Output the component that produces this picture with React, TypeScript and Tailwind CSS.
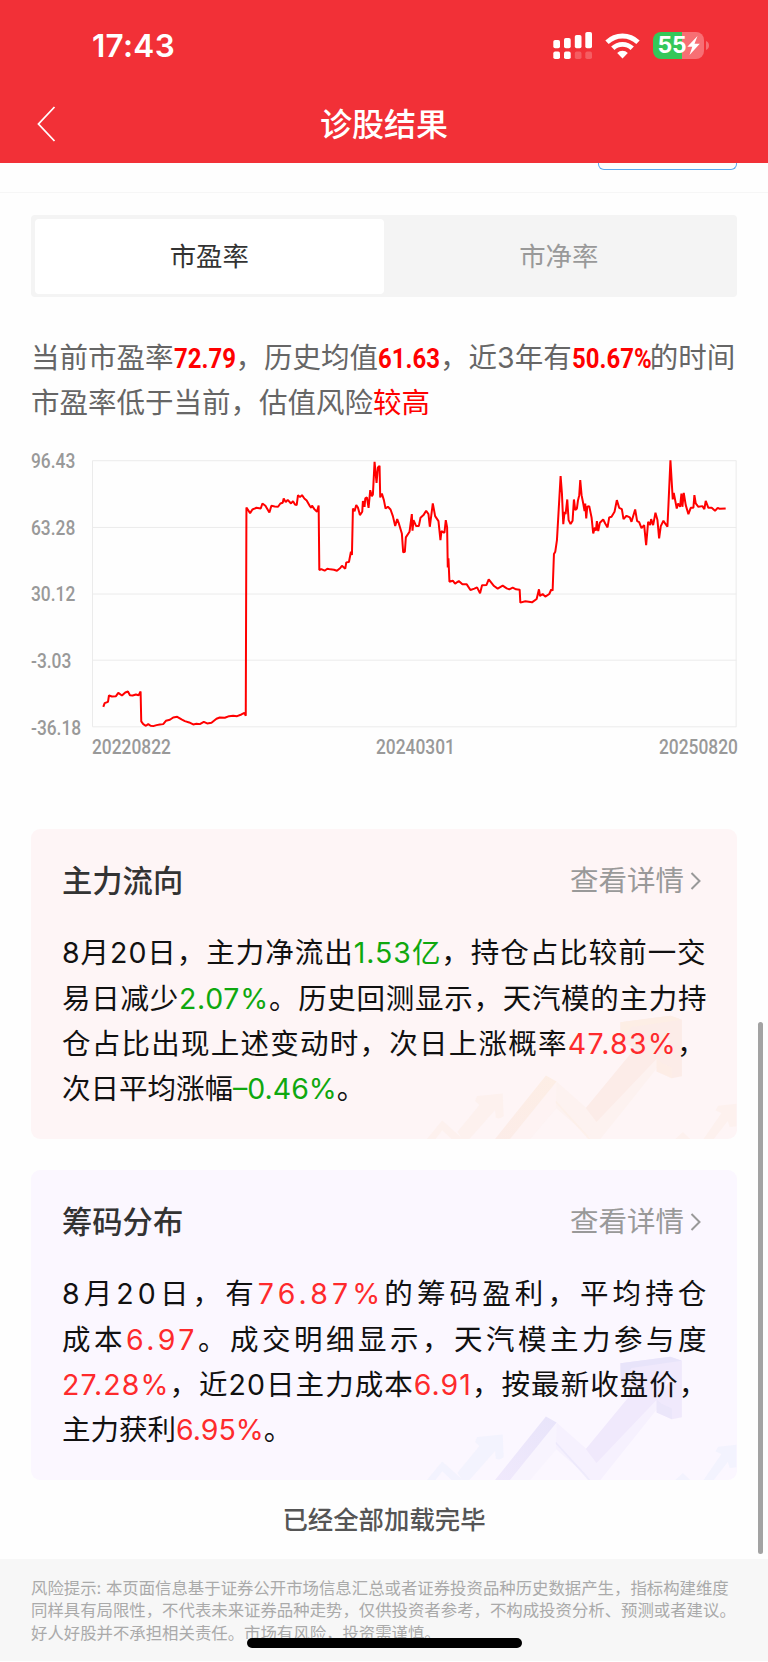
import type { ReactNode } from "react";
import clsx from "clsx";

const PE_SERIES =
  "310,801 314,790 324,786 327,767 336,770 348,769 355,759 366,767 376,758 384,755 390,766 398,767 408,764 416,766 422,755 424,845 430,853 438,858 445,853 452,858 460,859 470,856 480,854 490,853 498,843 510,840 520,833 532,831 545,839 555,844 568,848 580,854 590,852 600,853 612,846 622,851 635,849 650,837 660,833 675,834 688,829 700,828 712,829 725,824 734,819 738,828 740,202 751,219 758,208 770,203 783,205 788,190 797,197 809,217 815,197 825,199 835,200 842,190 849,188 852,175 858,186 864,179 874,190 880,183 886,193 891,195 895,165 901,171 907,165 914,175 921,181 930,197 935,203 937,196 944,207 952,215 957,196 959,390 965,387 975,392 983,386 992,388 1003,389 1012,392 1022,384 1027,377 1037,386 1040,367 1048,366 1054,335 1057,345 1060,205 1065,213 1070,195 1075,202 1081,225 1088,215 1090,183 1095,200 1097,175 1102,172 1107,203 1112,150 1117,168 1120,163 1125,65 1131,128 1135,82 1140,77 1142,172 1147,160 1153,180 1158,205 1165,200 1173,208 1180,228 1187,258 1193,237 1198,250 " +
  "1207,280 1211,337 1216,335 1219,292 1230,275 1237,222 1239,272 1242,240 1250,258 1258,258 1263,233 1272,225 1280,212 1287,222 1291,260 1300,190 1307,228 1317,243 1323,300 1326,273 1335,278 1339,240 1343,262 1345,382 1347,355 1350,425 1360,422 1367,431 1378,423 1389,433 1402,433 1413,450 1425,446 1433,442 1442,460 1448,436 1461,435 1468,418 1484,438 1495,446 1510,437 1522,445 1530,448 1540,443 1550,448 1561,449 1563,488 1578,484 1598,487 1612,477 1619,448 1622,468 1630,462 1638,470 1650,462 1656,448 1660,452 1664,342 1668,335 1673,300 1684,108 1688,160 1692,252 1696,215 1699,222 1704,178 1708,240 1714,252 1720,242 1724,178 1728,210 1733,205 1736,182 1740,165 1743,120 1747,165 1752,190 1756,213 1758,190 1761,235 1764,200 1770,198 1777,232 1782,280 1787,262 1790,272 1793,243 1797,273 1802,248 1812,238 1818,250 1825,262 1830,232 1837,230 1846,215 1853,180 1860,203 1868,207 1873,237 1882,227 1892,232 1897,245 1908,208 1914,243 1920,246 1927,264 1935,255 1941,315 1947,245 1953,255 1956,237 1962,255 1969,218 1975,240 1980,295 1985,258 1993,242 1998,250 2005,260 2008,195 2014,60 2021,178 2024,158 2033,205 2037,190 2043,200 2047,160 2050,200 2054,158 2060,195 2068,222 2075,203 2083,203 2086,165 2090,190 2098,200 2110,198 2116,207 2120,182 2128,203 2138,203 2148,212 2156,203 2162,206 2180,205";

const Y_TICKS = ["96.43", "63.28", "30.12", "-3.03", "-36.18"];
const GRID_Y = [61.5, 262, 462, 661, 861];

function SignalIcon() {
  return (
    <svg width="40" height="28" viewBox="0 0 40 28" fill="#fff">
      <rect x="0.3" y="8" width="6.7" height="8.3" rx="1.8" />
      <rect x="11" y="6" width="6.7" height="10.3" rx="1.8" />
      <rect x="21.8" y="3" width="6.7" height="13.3" rx="1.8" />
      <rect x="32.3" y="0" width="6.7" height="16.3" rx="1.8" />
      <rect x="0.3" y="19.6" width="6.7" height="7.4" rx="1.8" />
      <rect x="11" y="19.6" width="6.7" height="7.4" rx="1.8" />
      <rect x="21.8" y="19.6" width="6.7" height="7.4" rx="1.8" opacity="0.22" />
      <rect x="32.3" y="19.6" width="6.7" height="7.4" rx="1.8" opacity="0.22" />
    </svg>
  );
}

function WifiIcon() {
  return (
    <svg width="35" height="26" viewBox="0 0 35 26" fill="none">
      <g stroke="#fff" strokeWidth="4.8">
        <path d="M2 9.3a22.2 22.2 0 0 1 31 0" />
        <path d="M7.8 15.3a13.8 13.8 0 0 1 19.4 0" />
      </g>
      <path d="M17.5 25.4l5.3-5.3a7.4 7.4 0 0 0-10.6 0z" fill="#fff" />
    </svg>
  );
}

function Battery() {
  return (
    <div className="flex items-center gap-[2px]">
      <div className="flex h-[27px] w-[51px] items-center justify-center rounded-[8px] bg-[linear-gradient(to_right,#34c759_56%,#f76f74_56%)]">
        <span className="text-[23px] font-bold leading-none tracking-[-0.2px]">55</span>
        <svg width="13" height="19" viewBox="0 0 13 19" fill="#fff">
          <path d="M10.500 0L0.300 10.800h5L2.500 19 12.800 7.800H7.500z" />
        </svg>
      </div>
      <svg width="4" height="9" viewBox="0 0 4 9">
        <path d="M0 0c4 1.2 4 7.8 0 9z" fill="#f76f74" />
      </svg>
    </div>
  );
}

function Header() {
  return (
    <header className="h-[163.4px] shrink-0 bg-[#f23037] text-white">
      <div className="flex h-[91px] items-center pl-[92px] pr-[58px]">
        <span className="mr-auto pt-px text-[31.5px] font-semibold leading-none tracking-[0.3px]">
          17:43
        </span>
        <SignalIcon />
        <div className="ml-[12px] mr-[13px]">
          <WifiIcon />
        </div>
        <Battery />
      </div>
      <div className="grid h-[66px] grid-cols-[1fr_auto_1fr] items-center px-[37px]">
        <svg width="19" height="36" viewBox="0 0 19 36" fill="none" stroke="#fff" strokeWidth="1.8">
          <path d="M17.5 1L1.5 18l16 17" />
        </svg>
        <h1 className="pt-px text-[32px] font-medium leading-none">诊股结果</h1>
      </div>
    </header>
  );
}

// Narrow numerals: squeezed glyphs in a box of the final width
function Din({ children, className }: { children: ReactNode; className: string }) {
  return (
    <span className={clsx("inline-block whitespace-nowrap font-['Roboto',sans-serif]", className)}>
      <span className="inline-block origin-left scale-x-[0.9]">{children}</span>
    </span>
  );
}

function Figure({ children, className }: { children: ReactNode; className: string }) {
  return (
    <span
      className={clsx(
        "inline-block whitespace-nowrap font-['Roboto',sans-serif] font-bold text-[#f00]",
        className,
      )}
    >
      <span className="inline-block origin-left scale-x-[0.84]">{children}</span>
    </span>
  );
}

function Summary() {
  return (
    <div className="mt-[39px] whitespace-nowrap text-[28.5px] leading-[43.7px] text-[#666]">
      <p>
        当前市盈率<Figure className="w-[62px]">72.79</Figure>
        ，历史均值<Figure className="w-[62px]">61.63</Figure>
        ，近3年有<Figure className="w-[78px]">50.67%</Figure>的时间
      </p>
      <p>
        市盈率低于当前，估值风险<span className="text-[#f00]">较高</span>
      </p>
    </div>
  );
}

function Chart() {
  return (
    <div className="mt-[27px] text-[19.3px] font-medium text-[#999]">
      <div className="flex">
        <div className="flex h-[286px] w-[61px] shrink-0 flex-col justify-between leading-[19px]">
          {Y_TICKS.map((tick) => (
            <Din key={tick} className="w-[61px]">
              {tick}
            </Din>
          ))}
        </div>
        <svg width="646" height="278" viewBox="276 36 1938 834" fill="none">
          <g stroke="#ebebeb" strokeWidth="3">
            {GRID_Y.map((y) => (
              <path key={y} d={`M277.5 ${y}H2212`} />
            ))}
            <path d="M277.5 61.5V861M2211.5 61.5V861" />
          </g>
          <polyline points={PE_SERIES} stroke="#f00" strokeWidth="6" strokeLinejoin="bevel" />
        </svg>
      </div>
      <div className="flex justify-between pl-[61px] leading-[19px]">
        <Din className="w-[78px]">20220822</Din>
        <Din className="w-[78px]">20240301</Din>
        <Din className="w-[78px]">20250820</Din>
      </div>
    </div>
  );
}

const TONES = {
  warm: { edge: "#fdeee5", face: "#fdf2f0", shade: "#fcece8", small: "#fdf1ee" },
  cool: { edge: "#e8e4fa", face: "#f6f1fe", shade: "#f0e9fc", small: "#f3f3fe" },
};

function ArrowArt({ tone }: { tone: keyof typeof TONES }) {
  const t = TONES[tone];
  const leg = `${tone}-leg`;
  return (
    <svg className="absolute bottom-0 right-0" width="312" height="126" viewBox="76 100 935 379">
      <defs>
        <linearGradient id={leg} x1="0" y1="1" x2="1" y2="0">
          <stop offset="0" stopColor={t.shade} />
          <stop offset="1" stopColor={t.edge} />
        </linearGradient>
      </defs>
      <path d="M330 479L470 306v80l-80 93z" fill={t.face} opacity="0.5" />
      <path d="M470 306l90 80 40 50-25 43-107-93z" fill={t.face} />
      <path d="M468 364l105 115h-8l-97-108z" fill={t.edge} opacity="0.6" />
      <path d="M285 479L438 288l32 18-140 173z" fill={`url(#${leg})`} />
      <path d="M570 479l15-60 190-215 37 12L602 479z" fill={t.face} />
      <path d="M558 386l148-180-44-18v-60l150 20-27 75-195 205z" fill={t.shade} />
      <path d="M662 128l150-20 35 12v170l-30 6-46-20v-40l41-56-62-20z" fill={t.shade} />
      <path d="M662 128l150-20 35 12-152 22-31 46z" fill={t.edge} />
      <path d="M785 250l32 14v32l-46-20v-40z" fill={t.edge} opacity="0.7" />
      <g fill={t.small}>
        <path d="M80 479l46-56 60 54-2 2h-30l-28-26-20 26zM186 479l-14-22 66-80-13-12 6-15 77-8 3 68q-12 12-24 4l-2-22-77 87z" />
        <path d="M827 479l23-21 22 21zM912 479l54-78-18-8 8-14 55-6v68l-20 2-6-18-42 54z" />
      </g>
    </svg>
  );
}

function Red({ children }: { children: ReactNode }) {
  return <span className="text-[#fe2a2c]">{children}</span>;
}

function Green({ children }: { children: ReactNode }) {
  return <span className="text-[#0fa80f]">{children}</span>;
}

function DetailCard({
  title,
  tone,
  className,
  children,
}: {
  title: string;
  tone: keyof typeof TONES;
  className: string;
  children: ReactNode;
}) {
  return (
    <section
      className={clsx(
        "relative h-[310.5px] shrink-0 overflow-hidden rounded-[9px] px-[31px] pt-[32px]",
        className,
      )}
    >
      <ArrowArt tone={tone} />
      <div className="relative flex h-[40px] items-center justify-between pr-[5px]">
        <h2 className="text-[30.3px] font-medium leading-none text-[#333]">{title}</h2>
        <div className="flex items-center gap-[6px] text-[28.5px] leading-none text-[#999]">
          查看详情
          <svg width="11" height="18" viewBox="0 0 11 18" fill="none" stroke="#999" strokeWidth="2">
            <path d="M1.5 1l8 8-8 8" />
          </svg>
        </div>
      </div>
      <div className="relative mt-[29.5px] whitespace-nowrap text-[28.5px] leading-[45.3px] text-[#111]">
        {children}
      </div>
    </section>
  );
}

export default function App() {
  return (
    <div className="relative flex h-[1662px] w-[768px] flex-col overflow-hidden bg-[#fefefe] font-['Inter','Noto_Sans_CJK_SC',sans-serif]">
      <Header />

      <div className="flex h-[30px] shrink-0 justify-end border-b border-[#f6f6f6] pr-[31px]">
        <div className="h-[7px] w-[139px] rounded-b-[6px] border border-t-0 border-[#5aaaf0]" />
      </div>

      <main className="flex flex-col px-[31px]">
        <div className="mt-[22px] flex h-[82px] shrink-0 rounded-[4px] bg-[#f4f4f4] p-[3.5px] text-[26.4px]">
          <div className="flex flex-1 items-center justify-center rounded-[4px] bg-white text-[#333]">
            市盈率
          </div>
          <div className="flex flex-1 items-center justify-center text-[#999]">市净率</div>
        </div>

        <Summary />
        <Chart />

        <DetailCard title="主力流向" tone="warm" className="mt-[72px] bg-[#fef5f6]">
          <p className="tracking-[0.97px]">
            8月20日，主力净流出<Green>1.53亿</Green>，持仓占比较前一交
          </p>
          <p className="tracking-[0.72px]">
            易日减少<Green>2.07%</Green>。历史回测显示，天汽模的主力持
          </p>
          <p className="tracking-[1.25px]">
            仓占比出现上述变动时，次日上涨概率<Red>47.83%</Red>，
          </p>
          <p>
            次日平均涨幅<Green>–0.46%</Green>。
          </p>
        </DetailCard>

        <DetailCard title="筹码分布" tone="cool" className="mt-[30.5px] bg-[#fbf7ff]">
          <p className="tracking-[4.12px]">
            8月20日，有<Red>76.87%</Red>的筹码盈利，平均持仓
          </p>
          <p className="tracking-[3.5px]">
            成本<Red>6.97</Red>。成交明细显示，天汽模主力参与度
          </p>
          <p className="tracking-[1.05px]">
            <Red>27.28%</Red>，近20日主力成本<Red>6.91</Red>，按最新收盘价，
          </p>
          <p>
            主力获利<Red>6.95%</Red>。
          </p>
        </DetailCard>
      </main>

      <p className="flex h-[79px] shrink-0 items-center justify-center text-[25.4px] font-medium text-[#555]">
        已经全部加载完毕
      </p>

      <footer className="h-[102px] shrink-0 whitespace-nowrap bg-[#f7f7f7] px-[31px] pt-[17.5px] text-[16.4px] leading-[22.5px] text-[#aaa]">
        <p>风险提示: 本页面信息基于证券公开市场信息汇总或者证券投资品种历史数据产生，指标构建维度</p>
        <p>同样具有局限性，不代表未来证券品种走势，仅供投资者参考，不构成投资分析、预测或者建议。</p>
        <p>好人好股并不承担相关责任。市场有风险，投资需谨慎。</p>
      </footer>

      {/* scrollbar and home indicator float over the page */}
      <div className="absolute right-[5.5px] top-[1022px] h-[532px] w-[5px] rounded-full bg-[#a3a3a3]" />
      <div className="absolute left-[247px] top-[1638px] h-[9.5px] w-[274.5px] rounded-full bg-black" />
    </div>
  );
}
